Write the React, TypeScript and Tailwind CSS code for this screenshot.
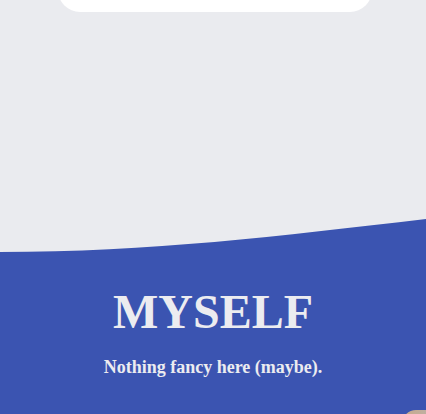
export default function App() {
  return (
    <div className="w-[426px] h-[414px] overflow-hidden bg-[#eaebef] flex flex-col" style={{ fontFamily: '"Liberation Serif", "Times New Roman", serif' }}>
      {/* top area with the tail of a card */}
      <div className="flex h-[218px] shrink-0 items-start">
        <div className="ml-[58px] mt-[-48px] h-[60px] w-[314px] rounded-[22px] bg-white" />
      </div>

      {/* curved edge */}
      <svg className="block w-[426px] h-[34px] shrink-0" viewBox="0 0 426 34" preserveAspectRatio="none">
        <path d="M0,34 C150,34 280,18 426,1 L426,34 Z" fill="#3b54b1" />
      </svg>

      <section className="relative flex-1 bg-[#3b54b1] pt-[32px] text-center text-[#ececf0]">
        <h1 className="text-[48px] leading-[56px] font-bold">MYSELF</h1>
        <p className="mt-[15px] text-[18px] leading-[24px] font-bold">Nothing fancy here (maybe).</p>
        <div className="absolute left-[402px] top-[158px] h-[20px] w-[40px] rounded-tl-[14px] bg-gradient-to-r from-[#c9a98a] to-[#b9b3ae]" />
      </section>
    </div>
  );
}
